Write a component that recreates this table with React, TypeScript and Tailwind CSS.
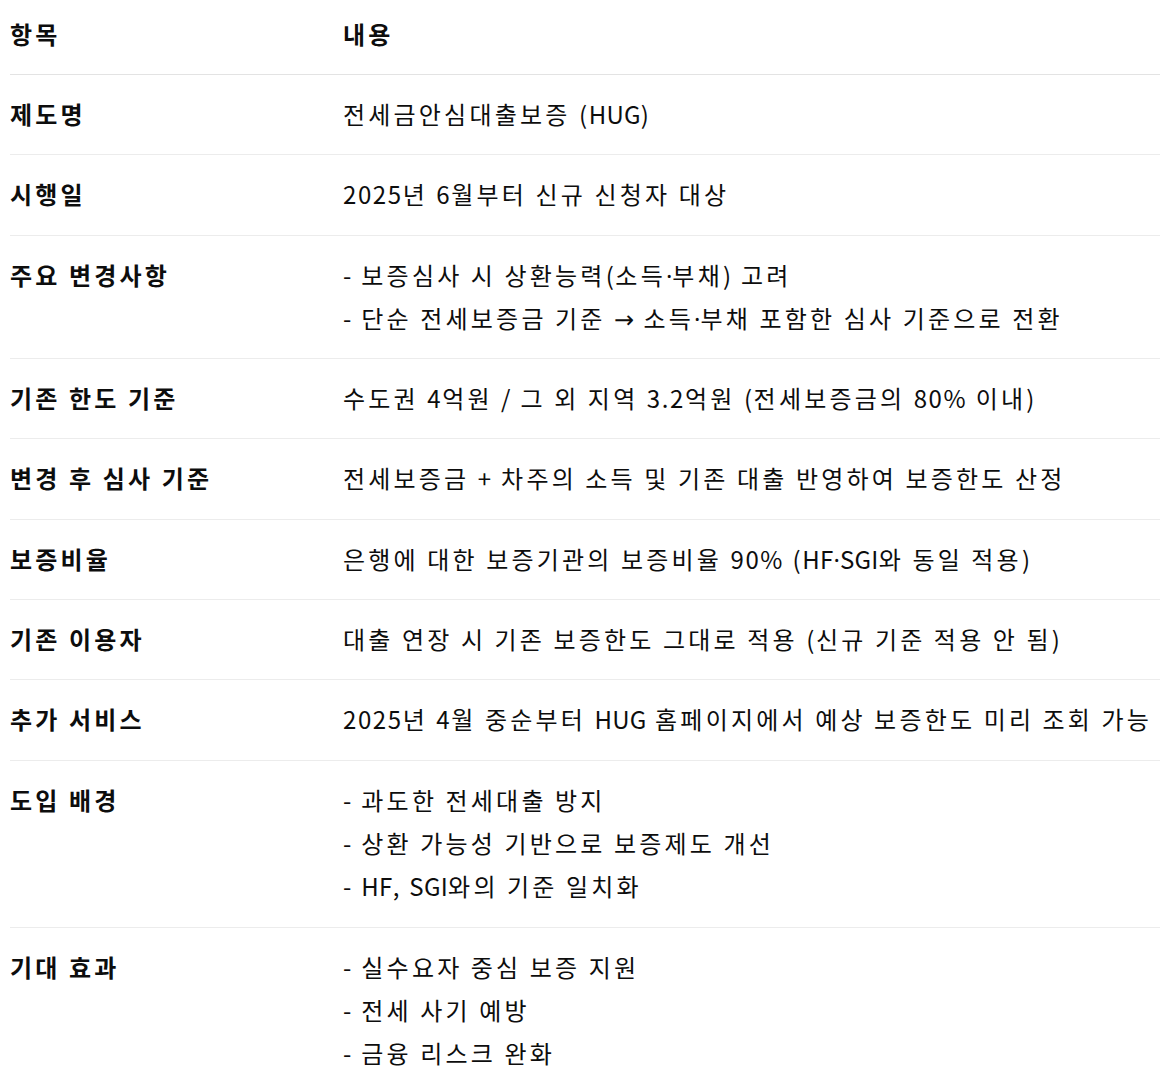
import React from "react";

const rows: { k: string; v: string[] }[] = [
  { k: "제도명", v: ["전세금안심대출보증 (HUG)"] },
  { k: "시행일", v: ["2025년 6월부터 신규 신청자 대상"] },
  {
    k: "주요 변경사항",
    v: [
      "- 보증심사 시 상환능력(소득·부채) 고려",
      "- 단순 전세보증금 기준 → 소득·부채 포함한 심사 기준으로 전환",
    ],
  },
  { k: "기존 한도 기준", v: ["수도권 4억원 / 그 외 지역 3.2억원 (전세보증금의 80% 이내)"] },
  { k: "변경 후 심사 기준", v: ["전세보증금 + 차주의 소득 및 기존 대출 반영하여 보증한도 산정"] },
  { k: "보증비율", v: ["은행에 대한 보증기관의 보증비율 90% (HF·SGI와 동일 적용)"] },
  { k: "기존 이용자", v: ["대출 연장 시 기존 보증한도 그대로 적용 (신규 기준 적용 안 됨)"] },
  { k: "추가 서비스", v: ["2025년 4월 중순부터 HUG 홈페이지에서 예상 보증한도 미리 조회 가능"] },
  {
    k: "도입 배경",
    v: ["- 과도한 전세대출 방지", "- 상환 가능성 기반으로 보증제도 개선", "- HF, SGI와의 기준 일치화"],
  },
  { k: "기대 효과", v: ["- 실수요자 중심 보증 지원", "- 전세 사기 예방", "- 금융 리스크 완화"] },
];

function Txt({ t }: { t: string }) {
  const parts = t.split(/([가-힣]+|[A-Za-z]+| +|→|·)/).filter((p) => p.length > 0);
  return (
    <>
      {parts.map((p, i) => {
        if (p === "→")
          return (
            <span key={i} className="font-['DejaVu_Sans',sans-serif] tracking-[1px] leading-[1px]">
              {p}
            </span>
          );
        if (p === "·")
          return (
            <span key={i} className="font-['Noto_Sans',sans-serif] tracking-normal leading-[1px]">
              {p}
            </span>
          );
        if (/[가-힣]/.test(p))
          return (
            <span key={i} className="tracking-[3.2px]">
              {p}
            </span>
          );
        if (/^ +$/.test(p))
          return (
            <span key={i} className="tracking-[3px]">
              {p}
            </span>
          );
        if (/[A-Za-z]/.test(p))
          return (
            <span key={i} className="tracking-[0.3px]">
              {p}
            </span>
          );
        return (
          <span key={i} className="tracking-[1.6px]">
            {p}
          </span>
        );
      })}
    </>
  );
}

export default function App() {
  return (
    <div
      className="bg-white text-[#0d0d0d] pl-[10px] w-[1160px] overflow-hidden"
      style={{ fontFamily: '"Noto Sans CJK KR", "Noto Sans", sans-serif' }}
    >
      <div className="flex border-b border-[#e3e3e3] pt-[12px] pb-[19px] text-[24px] leading-[43px] font-bold">
        <div className="w-[333px] shrink-0">
          <Txt t="항목" />
        </div>
        <div>
          <Txt t="내용" />
        </div>
      </div>
      {rows.map((r, i) => (
        <div
          key={i}
          className={`flex text-[24px] leading-[43.3px] pt-[17px] pb-[19px] ${
            i < rows.length - 1 ? "border-b border-[#ececec]" : ""
          }`}
        >
          <div className="w-[333px] shrink-0 font-bold">
            <Txt t={r.k} />
          </div>
          <div className="whitespace-nowrap">
            {r.v.map((t, j) => (
              <div key={j}>
                <Txt t={t} />
              </div>
            ))}
          </div>
        </div>
      ))}
    </div>
  );
}
